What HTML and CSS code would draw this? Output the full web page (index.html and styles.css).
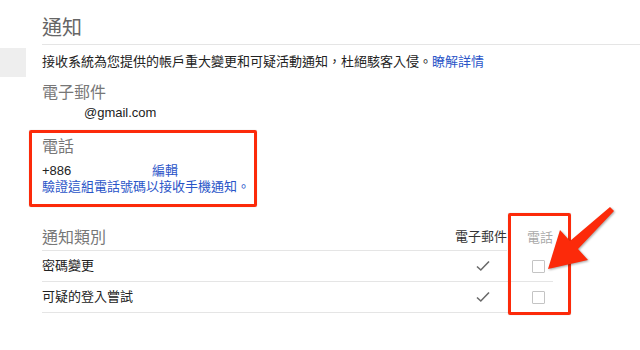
FILE: index.html
```html
<!DOCTYPE html>
<html lang="zh-Hant">
<head>
<meta charset="utf-8">
<link rel="stylesheet" href="styles.css">
</head>
<body>
<div class="page">
  <aside class="nav"><div class="nav-item"></div></aside>
  <main class="main">
    <h1 class="title">通知</h1>
    <p class="desc">接收系統為您提供的帳戶重大變更和可疑活動通知，杜絕駭客入侵。<a class="link" href="#">瞭解詳情</a></p>
    <h2 class="label">電子郵件</h2>
    <div class="email"><span class="email-local"></span>@gmail.com</div>
    <section class="phone">
      <h2 class="label">電話</h2>
      <div class="phone-row"><span class="num">+886</span><a class="link" href="#">編輯</a></div>
      <a class="link" href="#">驗證這組電話號碼以接收手機通知。</a>
    </section>
    <div class="table">
      <div class="thead">
        <div class="th th-label">通知類別</div>
        <div class="th th-email">電子郵件</div>
        <div class="th th-phone">電話</div>
      </div>
      <div class="row">
        <div class="cell-label">密碼變更</div>
        <div class="cell-email"><svg class="check" width="14" height="12" viewBox="0 0 14 12"><path d="M1 6.5 L4.8 10 L13 1.5" fill="none" stroke="#6a6a6a" stroke-width="1.6"/></svg></div>
        <div class="cell-phone"><span class="box"></span></div>
      </div>
      <div class="row">
        <div class="cell-label">可疑的登入嘗試</div>
        <div class="cell-email"><svg class="check" width="14" height="12" viewBox="0 0 14 12"><path d="M1 6.5 L4.8 10 L13 1.5" fill="none" stroke="#6a6a6a" stroke-width="1.6"/></svg></div>
        <div class="cell-phone"><span class="box"></span></div>
      </div>
      <div class="mark-box"></div>
      <svg class="arrow" width="80" height="75" viewBox="0 0 80 75"><polygon points="8,68 20,29 30,40 70,6 74,10 38,48 48,59" fill="#fc2a0a"/></svg>
    </div>
  </main>
</div>
</body>
</html>
```
FILE: styles.css
```css
* { box-sizing: border-box; }
html, body { margin: 0; padding: 0; background: #fff; }
body {
  font-family: "Liberation Sans", "Noto Sans CJK TC", sans-serif;
  color: #222;
  width: 640px;
  height: 350px;
  overflow: hidden;
}
.page { display: flex; }
.nav { width: 42px; flex: none; padding-top: 48px; }
.nav-item { width: 26px; height: 29px; background: #eeeeee; }
.main { flex: 1; }
.title {
  margin: 14px 0 0;
  font-size: 20px;
  font-weight: normal;
  line-height: 28px;
  padding-bottom: 2px;
  color: #666;
  border-bottom: 1px solid #e5e5e5;
}
.desc { margin: 7px 0 0; font-size: 13px; line-height: 20px; color: #222; }
.link { color: #2a55c8; text-decoration: none; }
.label { margin: 0; font-size: 16px; font-weight: normal; line-height: 22px; color: #777; }
.desc + .label { margin-top: 10px; }
.email { font-size: 13px; line-height: 18px; color: #222; display: flex; }
.email-local { width: 42px; }
.phone {
  margin: 8px 0 0 -13px;
  width: 228px;
  border: 3px solid #fc2a0a;
  border-radius: 2px;
  padding: 2px 0 9px 10px;
  font-size: 13px;
  box-shadow: 0 0 1px rgba(0,0,0,.3);
}
.phone .label { line-height: 24px; }
.phone-row { display: flex; line-height: 16px; margin-top: 4px; color: #222; }
.num { width: 110px; }
.phone > .link { display: block; line-height: 16px; }
.table { position: relative; width: 511px; margin-top: 19px; font-size: 13px; }
.thead { display: flex; height: 25px; }
.th { display: flex; align-items: center; padding-bottom: 5px; }
.th-label { flex: 1; font-size: 16px; color: #777; border-bottom: 1px solid #e5e5e5; }
.th-email { width: 52px; color: #333; border-bottom: 1px solid #e5e5e5; }
.th-phone { width: 26px; margin-left: 20px; color: #aaa; }
.row { display: flex; align-items: center; height: 31px; border-bottom: 1px solid #e5e5e5; }
.cell-label { flex: 1; color: #222; padding-bottom: 4px; }
.cell-email { width: 52px; display: flex; justify-content: center; padding-left: 4px; }
.cell-phone { width: 26px; margin-left: 20px; display: flex; justify-content: center; }
.check { display: block; }
.box { display: block; width: 13px; height: 13px; border: 1px solid #c4c4c4; border-radius: 1px; background: #fff; margin-left: -3px; }
.mark-box {
  position: absolute;
  left: 466px;
  top: -13px;
  width: 63px;
  height: 102px;
  border: 3px solid #fc2a0a;
  border-radius: 2px;
  box-shadow: 0 0 1px rgba(0,0,0,.3);
}
.arrow {
  position: absolute;
  left: 498px;
  top: -25px;
  filter: drop-shadow(1px 1px 1px rgba(0,0,0,.35));
}
```
